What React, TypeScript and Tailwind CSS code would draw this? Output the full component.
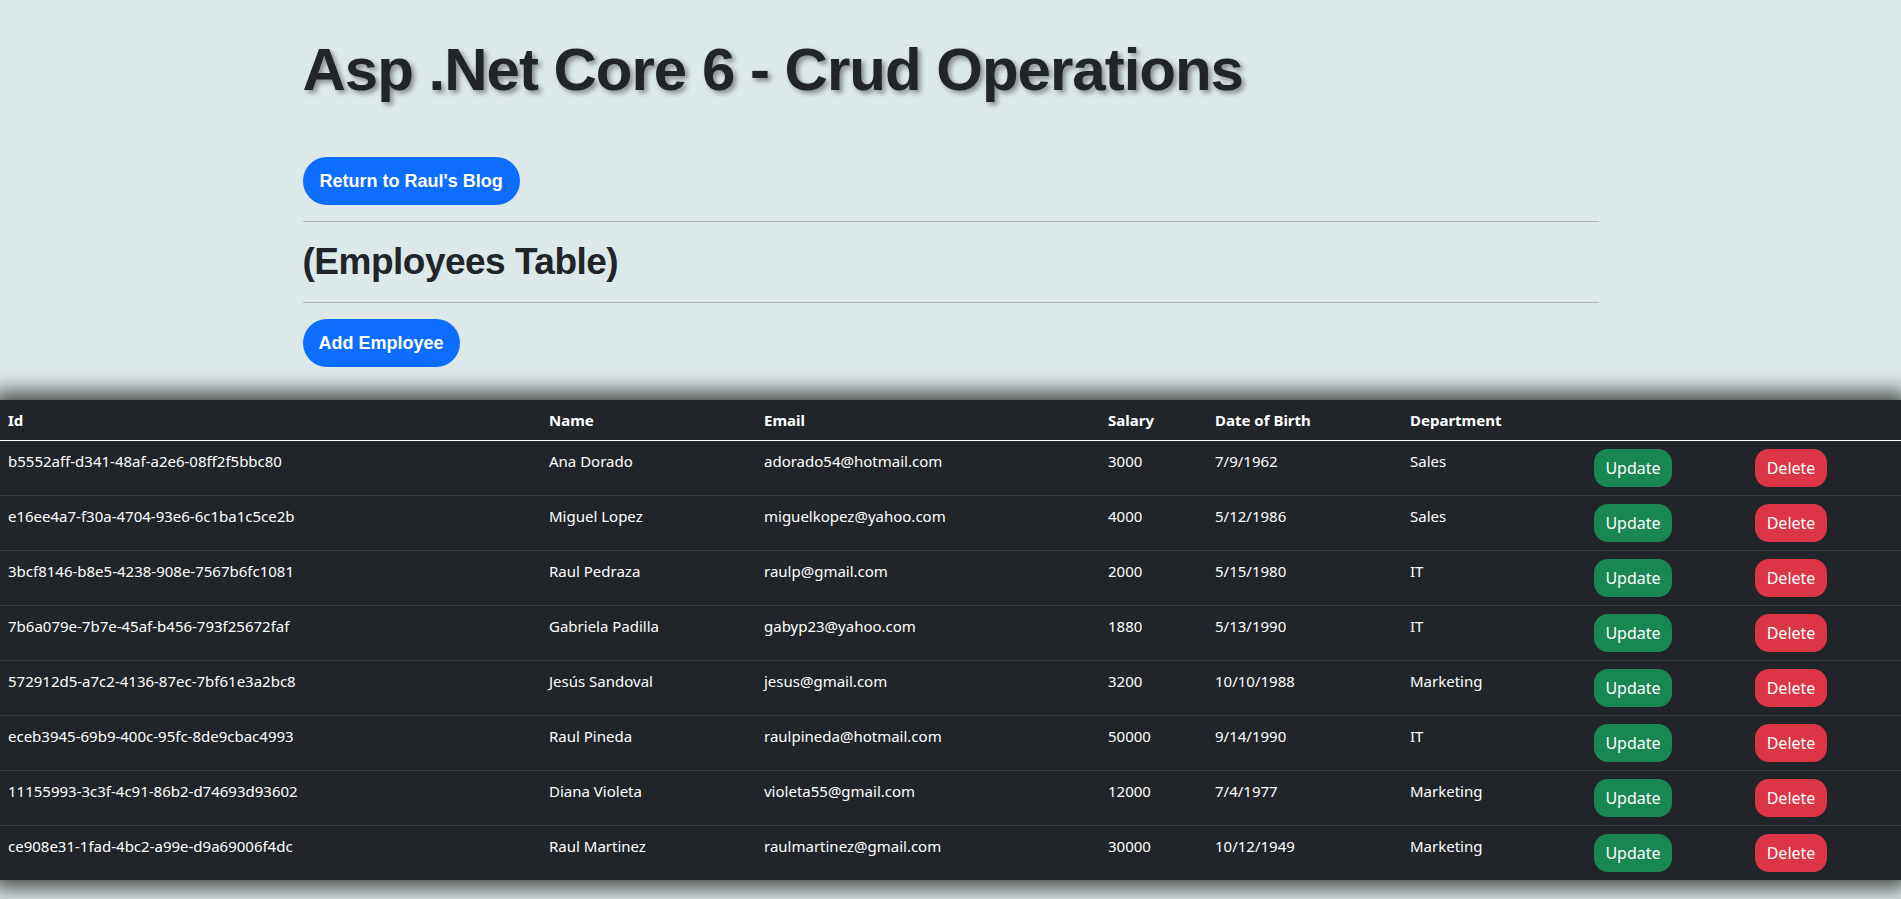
import React from 'react';

interface Employee {
  id: string;
  name: string;
  email: string;
  salary: number;
  dateOfBirth: string;
  department: string;
}

const employees: Employee[] = [
  { id: 'b5552aff-d341-48af-a2e6-08ff2f5bbc80', name: 'Ana Dorado', email: 'adorado54@hotmail.com', salary: 3000, dateOfBirth: '7/9/1962', department: 'Sales' },
  { id: 'e16ee4a7-f30a-4704-93e6-6c1ba1c5ce2b', name: 'Miguel Lopez', email: 'miguelkopez@yahoo.com', salary: 4000, dateOfBirth: '5/12/1986', department: 'Sales' },
  { id: '3bcf8146-b8e5-4238-908e-7567b6fc1081', name: 'Raul Pedraza', email: 'raulp@gmail.com', salary: 2000, dateOfBirth: '5/15/1980', department: 'IT' },
  { id: '7b6a079e-7b7e-45af-b456-793f25672faf', name: 'Gabriela Padilla', email: 'gabyp23@yahoo.com', salary: 1880, dateOfBirth: '5/13/1990', department: 'IT' },
  { id: '572912d5-a7c2-4136-87ec-7bf61e3a2bc8', name: 'Jesús Sandoval', email: 'jesus@gmail.com', salary: 3200, dateOfBirth: '10/10/1988', department: 'Marketing' },
  { id: 'eceb3945-69b9-400c-95fc-8de9cbac4993', name: 'Raul Pineda', email: 'raulpineda@hotmail.com', salary: 50000, dateOfBirth: '9/14/1990', department: 'IT' },
  { id: '11155993-3c3f-4c91-86b2-d74693d93602', name: 'Diana Violeta', email: 'violeta55@gmail.com', salary: 12000, dateOfBirth: '7/4/1977', department: 'Marketing' },
  { id: 'ce908e31-1fad-4bc2-a99e-d9a69006f4dc', name: 'Raul Martinez', email: 'raulmartinez@gmail.com', salary: 30000, dateOfBirth: '10/12/1949', department: 'Marketing' },
];

const headers = ['Id', 'Name', 'Email', 'Salary', 'Date of Birth', 'Department', '', ''];

const App: React.FC = () => {
  return (
    <div className="min-h-screen bg-[#dde8e8] overflow-hidden">
      {/* Header section */}
      <div className="max-w-[1296px] mx-auto pt-[34px] font-['Liberation_Sans',Arial,sans-serif] text-[#212529]">
        <h1 className="text-[60px] leading-[72px] font-bold tracking-[-1px] [text-shadow:3px_3px_5px_rgba(0,0,0,0.4)]">
          Asp .Net Core 6 - Crud Operations
        </h1>

        <button className="mt-[51px] h-12 px-[17px] rounded-full bg-[#0d6efd] text-white text-[18px] font-bold">
          Return to Raul's Blog
        </button>

        <hr className="mt-4 border-0 border-t border-[#adb6b7]" />

        <h2 className="mt-[18px] text-[37px] leading-[44px] font-bold tracking-[-0.5px]">(Employees Table)</h2>

        <hr className="mt-[18px] border-0 border-t border-[#adb6b7]" />

        <button className="mt-4 h-12 px-4 rounded-full bg-[#0d6efd] text-white text-[18px] font-bold">
          Add Employee
        </button>
      </div>

      {/* Table */}
      <div className="mt-[33px] bg-[#212529] shadow-[0_0_20px_8px_rgba(0,0,0,0.7)]">
        <table className="w-full table-fixed border-collapse text-white text-[15px] leading-6 font-['Noto_Sans',sans-serif]">
          <colgroup>
            <col className="w-[541px]" />
            <col className="w-[215px]" />
            <col className="w-[344px]" />
            <col className="w-[107px]" />
            <col className="w-[195px]" />
            <col className="w-[184px]" />
            <col className="w-[161px]" />
            <col />
          </colgroup>
          <thead>
            <tr>
              {headers.map((h, i) => (
                <th key={i} className="px-2 py-2 text-left font-bold border-b border-white">
                  {h}
                </th>
              ))}
            </tr>
          </thead>
          <tbody>
            {employees.map((emp, idx) => (
              <tr key={emp.id} className={idx < employees.length - 1 ? 'border-b border-[#373b3e]' : ''}>
                <td className="px-2 py-2 align-top">{emp.id}</td>
                <td className="px-2 py-2 align-top">{emp.name}</td>
                <td className="px-2 py-2 align-top">{emp.email}</td>
                <td className="px-2 py-2 align-top">{emp.salary}</td>
                <td className="px-2 py-2 align-top">{emp.dateOfBirth}</td>
                <td className="px-2 py-2 align-top">{emp.department}</td>
                <td className="px-2 py-2 align-top">
                  <button className="w-[78px] h-[38px] rounded-[14px] bg-[#198754] text-white text-[16px]">
                    Update
                  </button>
                </td>
                <td className="px-2 py-2 align-top">
                  <button className="w-[72px] h-[38px] rounded-[14px] bg-[#dc3545] text-white text-[16px]">
                    Delete
                  </button>
                </td>
              </tr>
            ))}
          </tbody>
        </table>
      </div>
    </div>
  );
};

export default App;
